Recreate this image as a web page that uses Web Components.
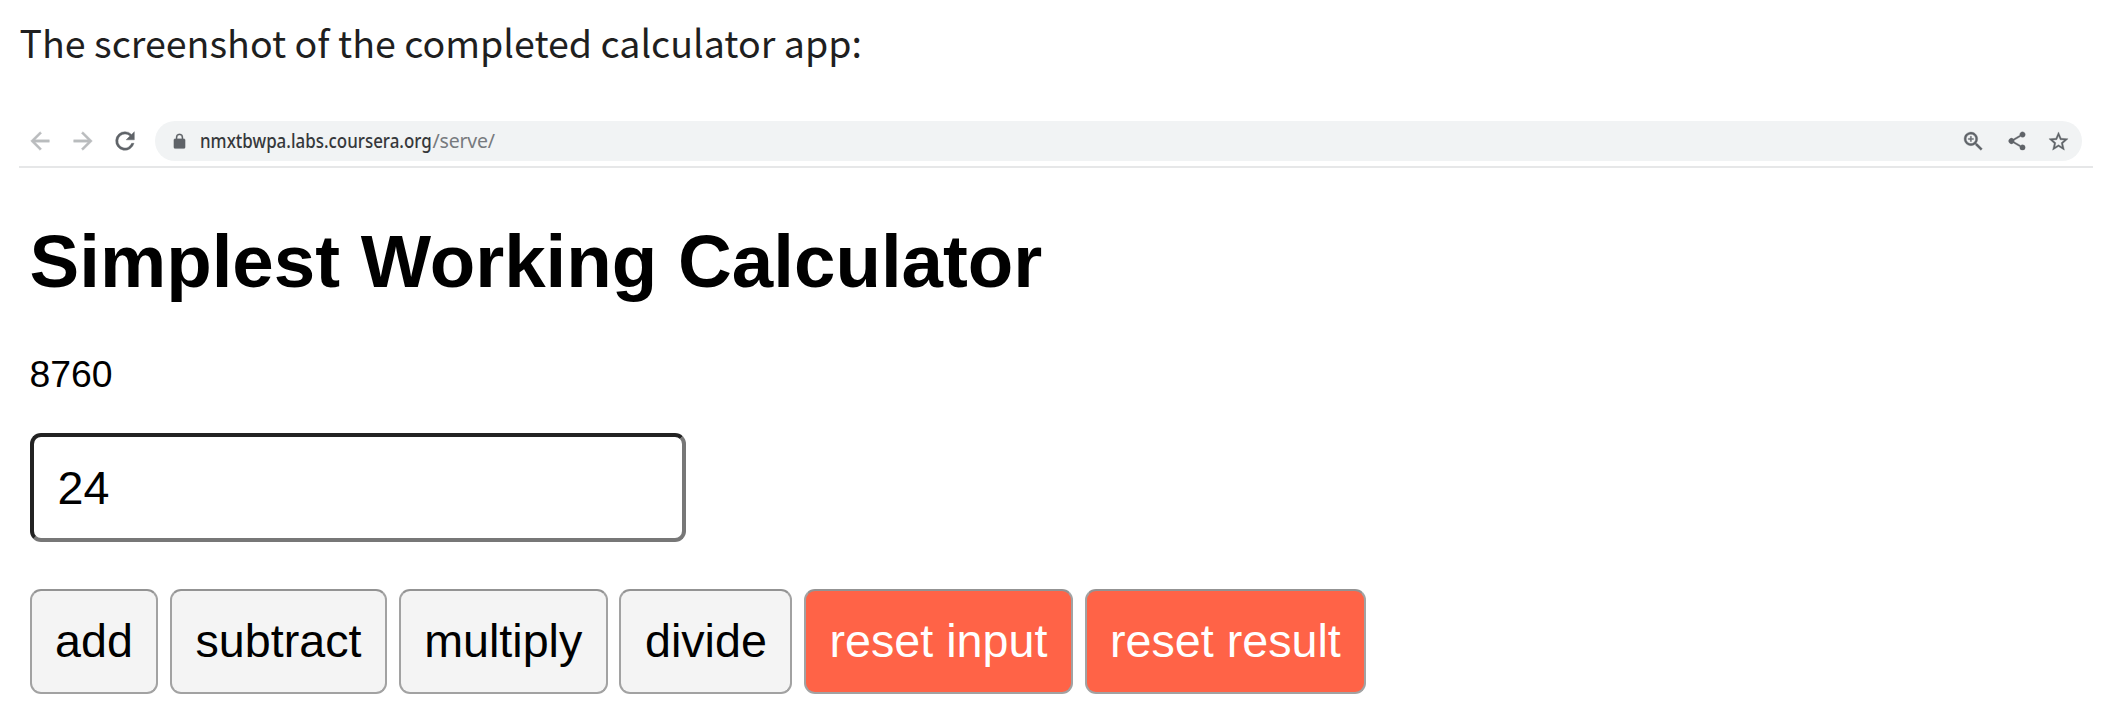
<!DOCTYPE html>
<html lang="en">
<head>
<meta charset="utf-8">
<title>Simplest Working Calculator</title>
<style>
body{margin:0;background:#fff;width:2105px;height:727px;overflow:hidden}
</style>
</head>
<body>
<lab-page>
  <span slot="caption">The screenshot of the completed calculator app:</span>
  <browser-bar slot="bar"><span slot="host">nmxtbwpa.labs.coursera.org</span><span slot="path">/serve/</span></browser-bar>
  <calc-app></calc-app>
</lab-page>
<script>
const define = (name, html) => customElements.define(name, class extends HTMLElement {
  constructor() {
    super();
    this.attachShadow({ mode: 'open' }).innerHTML = html;
  }
});

define('lab-page', `
<style>
:host{display:flex;flex-direction:column;height:727px;padding:0 12px 0 19px;box-sizing:border-box}
p{margin:0;height:121px;box-sizing:border-box;padding:14px 0 0 .5px;font:37.600px/56px "Noto Sans CJK SC",sans-serif;color:#1f1f1f;white-space:nowrap}
</style>
<p><slot name="caption"></slot></p><slot name="bar"></slot><slot></slot>`);

const paths = {
  back: 'M20 11H7.83l5.59-5.59L12 4l-8 8 8 8 1.41-1.41L7.83 13H20v-2z',
  forward: 'M12 4l-1.41 1.41L16.17 11H4v2h12.17l-5.58 5.59L12 20l8-8z',
  reload: 'M17.65 6.35A7.96 7.96 0 0 0 12 4a8 8 0 1 0 7.73 10h-2.08A6 6 0 1 1 12 6c1.66 0 3.14.69 4.22 1.78L13 11h7V4l-2.35 2.35z',
  lock: 'M18 8h-1V6A5 5 0 0 0 7 6v2H6c-1.1 0-2 .9-2 2v10c0 1.1.9 2 2 2h12c1.1 0 2-.9 2-2V10c0-1.100-.9-2-2-2zM8.800 8V6a3.200 3.200 0 0 1 6.400 0v2z',
  zoom: 'M15.500 14h-.79l-.28-.27A6.500 6.500 0 1 0 13.730 14.430l.27.28v.79l5 4.990L20.490 19zM9.500 14a4.500 4.500 0 1 1 0-9 4.500 4.500 0 0 1 0 9zM12 9h-2V7H9v2H7v1h2v2h1v-2h2z',
  share: 'M18 16.080c-.76 0-1.440.3-1.960.77L8.910 12.700a3.300 3.300 0 0 0 0-1.400l7.050-4.110A3 3 0 1 0 15 5c0 .24.04.47.09.7L8.040 9.810a3 3 0 1 0 0 4.380l7.120 4.160c-.05.21-.08.43-.08.65A2.920 2.920 0 1 0 18 16.080z',
  star: 'M22 9.240l-7.190-.62L12 2 9.190 8.630 2 9.240l5.460 4.730L5.820 21 12 17.270 18.180 21l-1.630-7.030zM12 15.400l-3.760 2.270 1-4.280-3.320-2.880 4.380-.38L12 6.100l1.710 4.040 4.380.38-3.320 2.880 1 4.280z'
};
customElements.define('ui-icon', class extends HTMLElement {
  connectedCallback() {
    const s = this.getAttribute('size');
    this.attachShadow({ mode: 'open' }).innerHTML = `
<style>:host{display:block;flex:none;width:${s}px;height:${s}px}svg{display:block;width:100%;height:100%;fill:currentColor;stroke:currentColor;stroke-width:.35}</style>
<svg viewBox="0 0 24 24"><path d="${paths[this.getAttribute('name')]}"/></svg>`;
  }
});

define('browser-bar', `
<style>
:host{display:flex;align-items:flex-start;height:47px;box-sizing:border-box;border-bottom:2px solid #e6e7e8;padding:0 11px 0 7px;color:#5f6368}
nav{display:flex;align-items:center;height:40px;gap:14.600px;width:129px}
.off{color:#babcbe}
.field{flex:1;display:flex;align-items:center;height:40px;border-radius:20px;background:#f1f3f4;padding:0 12px 0 15.500px;box-sizing:border-box}
.url{flex:1;margin-left:12.500px;font:500 19.500px/38px "Noto Sans",sans-serif;white-space:nowrap;display:flex}
.host{color:#36383b;width:232.500px;transform:scaleX(.868);transform-origin:0 50%}
.path{color:#777a7e;letter-spacing:-.2px;font-weight:400}
.tools{display:flex;align-items:center;gap:19.500px}
</style>
<nav><ui-icon class="off" name="back" size="28"></ui-icon><ui-icon class="off" name="forward" size="28"></ui-icon><ui-icon name="reload" size="28"></ui-icon></nav>
<div class="field"><ui-icon name="lock" size="17"></ui-icon>
<div class="url"><span class="host"><slot name="host"></slot></span><span class="path"><slot name="path"></slot></span></div>
<div class="tools"><ui-icon name="zoom" size="25"></ui-icon><ui-icon name="share" size="22"></ui-icon><ui-icon name="star" size="23"></ui-icon></div></div>`);

define('calc-button', `
<style>
:host{display:block}
button{display:block;margin:0;height:105px;padding:0 23.500px;border:2px solid #a2a2a2;border-top-color:#939393;border-radius:11px;background:var(--fill,#f4f4f4);color:var(--ink,#000);font:46.670px/101px "Liberation Sans",Arial,sans-serif;box-sizing:border-box;white-space:nowrap}
</style><button type="button"><slot></slot></button>`);

define('calc-app', `
<style>
:host{display:flex;flex-direction:column;align-items:flex-start;padding-left:10.500px;font-family:"Liberation Sans",Arial,sans-serif;color:#000}
h1{margin:51px 0 0 0;font-size:74.500px;line-height:86px;font-weight:700;white-space:nowrap}
output{display:block;margin-top:47px;font-size:37.330px;line-height:44px;height:44px}
input{margin:37px 0 0;width:656px;height:109px;border:4px solid;border-color:#222 #777 #777 #222;border-radius:11px;padding:0 24px;font:46.670px "Liberation Sans",Arial,sans-serif;color:#000;background:#fff;box-sizing:border-box}
.keys{display:flex;margin-top:47px;gap:11.670px}
.reset{--fill:#ff6347;--ink:#fff}
</style>
<h1>Simplest Working Calculator</h1>
<output>8760</output>
<input type="text" value="24" aria-label="Number">
<div class="keys"><calc-button>add</calc-button><calc-button>subtract</calc-button><calc-button>multiply</calc-button><calc-button>divide</calc-button><calc-button class="reset">reset input</calc-button><calc-button class="reset">reset result</calc-button></div>`);
</script>
</body>
</html>
